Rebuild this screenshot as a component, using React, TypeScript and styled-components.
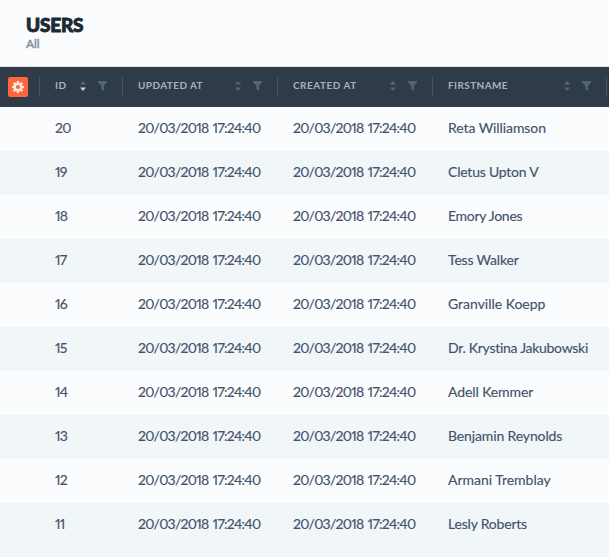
import React from "react";
import styled, { createGlobalStyle } from "styled-components";

const GlobalStyle = createGlobalStyle`
  *, *::before, *::after { box-sizing: border-box; }
  html, body { margin: 0; height: 100%; overflow: hidden; }
  body { background: #fbfcfe; font-family: Lato, "Open Sans", sans-serif; }
`;

const Page = styled.main`
  width: 609px;
  height: 557px;
  overflow: hidden;
  display: flex;
  flex-direction: column;
`;

const PageHeader = styled.header`
  height: 67px;
  flex: none;
  padding: 14px 0 0 26px;
  border-bottom: 1px solid #dce6ea;
`;

const Title = styled.h1`
  margin: 0;
  font-size: 19px;
  line-height: 22px;
  font-weight: 900;
  letter-spacing: -0.2px;
  color: #1d2a35;
  -webkit-text-stroke: 0.9px #1d2a35;
`;

const Subtitle = styled.div`
  font-size: 12px;
  line-height: 16px;
  letter-spacing: -0.1px;
  color: #8091a7;
  -webkit-text-stroke: 0.5px #8091a7;
`;

const columns = "39px 83px 155px 155px 174px 1fr";

const HeadRow = styled.div`
  display: grid;
  grid-template-columns: ${columns};
  align-items: center;
  height: 40px;
  flex: none;
  background: #2f3b48;
`;

const GearCell = styled.div`
  padding-left: 8px;
`;

const GearButton = styled.button`
  display: flex;
  align-items: center;
  justify-content: center;
  width: 20px;
  height: 20px;
  padding: 0;
  border: 0;
  border-radius: 2px;
  background: #ff663b;
`;

const HeadCell = styled.div`
  display: flex;
  align-items: center;
  height: 20px;
  padding: 0 15px;
  border-left: 1px solid #43566b;
`;

const HeadLabel = styled.span<{ $spacing: number }>`
  flex: 1;
  font-size: 10px;
  line-height: 17px;
  padding-bottom: 3px;
  font-weight: 700;
  letter-spacing: ${(p) => p.$spacing}px;
  white-space: nowrap;
  color: #a5b3c1;
`;

const HeadIcons = styled.div`
  display: flex;
  align-items: center;
  gap: 12px;
  padding-bottom: 2px;
`;

const Row = styled.div<{ $striped: boolean }>`
  display: grid;
  grid-template-columns: ${columns};
  height: 44px;
  flex: none;
  background: ${(p) => (p.$striped ? "#f1f6f9" : "#fbfcfe")};
`;

const Filler = styled.div`
  flex: 1;
  background: #f1f6f9;
`;

const Cell = styled.div<{ $spacing: number }>`
  padding-left: 16px;
  font-size: 14px;
  line-height: 42px;
  font-variant-numeric: proportional-nums;
  white-space: nowrap;
  letter-spacing: ${(p) => p.$spacing}px;
  color: #42526a;
  -webkit-text-stroke: 0.15px #42526a;
`;

const DateCell = styled(Cell)`
  word-spacing: 1.2px;
`;

function GearIcon() {
  return (
    <svg width="12" height="12" viewBox="0 0 12 12" fill="none">
      <circle cx="6" cy="6" r="3.3" stroke="#ffe9e0" strokeWidth="2.4" />
      {[0, 45, 90, 135, 180, 225, 270, 315].map((angle) => (
        <rect key={angle} x="4.85" y="0" width="2.3" height="2.4" rx="0.3" fill="#ffe9e0" transform={`rotate(${angle} 6 6)`} />
      ))}
    </svg>
  );
}

function SortIcon({ active }: { active: boolean }) {
  return (
    <svg width="6" height="10" viewBox="0 0 6 10">
      <path d="M0 3.5 3 0l3 3.5z" fill="#53657b" />
      <path d="M0 6.5h6L3 10z" fill={active ? "#cbd8e2" : "#53657b"} />
    </svg>
  );
}

function FilterIcon() {
  return (
    <svg width="9" height="10" viewBox="0 0 9 10">
      <path d="M0 0h9v1.2L6 4.8V10L3.2 8V4.8L0 1.2z" fill="#50647c" />
    </svg>
  );
}

const headings = [
  { label: "ID", spacing: 0.5, sorted: true },
  { label: "UPDATED AT", spacing: 0.4, sorted: false },
  { label: "CREATED AT", spacing: 0.5, sorted: false },
  { label: "FIRSTNAME", spacing: 0.4, sorted: false },
];

const timestamp = "20/03/2018 17:24:40";

const users = [
  { id: 20, name: "Reta Williamson", spacing: -0.08 },
  { id: 19, name: "Cletus Upton V", spacing: -0.22 },
  { id: 18, name: "Emory Jones", spacing: -0.28 },
  { id: 17, name: "Tess Walker", spacing: -0.18 },
  { id: 16, name: "Granville Koepp", spacing: -0.02 },
  { id: 15, name: "Dr. Krystina Jakubowski", spacing: -0.28 },
  { id: 14, name: "Adell Kemmer", spacing: -0.1 },
  { id: 13, name: "Benjamin Reynolds", spacing: -0.13 },
  { id: 12, name: "Armani Tremblay", spacing: -0.02 },
  { id: 11, name: "Lesly Roberts", spacing: -0.2 },
];

export default function App() {
  return (
    <>
      <GlobalStyle />
      <Page>
        <PageHeader>
          <Title>USERS</Title>
          <Subtitle>All</Subtitle>
        </PageHeader>
        <HeadRow>
          <GearCell>
            <GearButton aria-label="Settings">
              <GearIcon />
            </GearButton>
          </GearCell>
          {headings.map((h) => (
            <HeadCell key={h.label}>
              <HeadLabel $spacing={h.spacing}>{h.label}</HeadLabel>
              <HeadIcons>
                <SortIcon active={h.sorted} />
                <FilterIcon />
              </HeadIcons>
            </HeadCell>
          ))}
          <HeadCell />
        </HeadRow>
        {users.map((u, i) => (
          <Row key={u.id} $striped={i % 2 === 1}>
            <span />
            <Cell $spacing={-0.7}>{u.id}</Cell>
            <DateCell $spacing={-0.73}>{timestamp}</DateCell>
            <DateCell $spacing={-0.73}>{timestamp}</DateCell>
            <Cell $spacing={u.spacing}>{u.name}</Cell>
          </Row>
        ))}
        <Filler />
      </Page>
    </>
  );
}
